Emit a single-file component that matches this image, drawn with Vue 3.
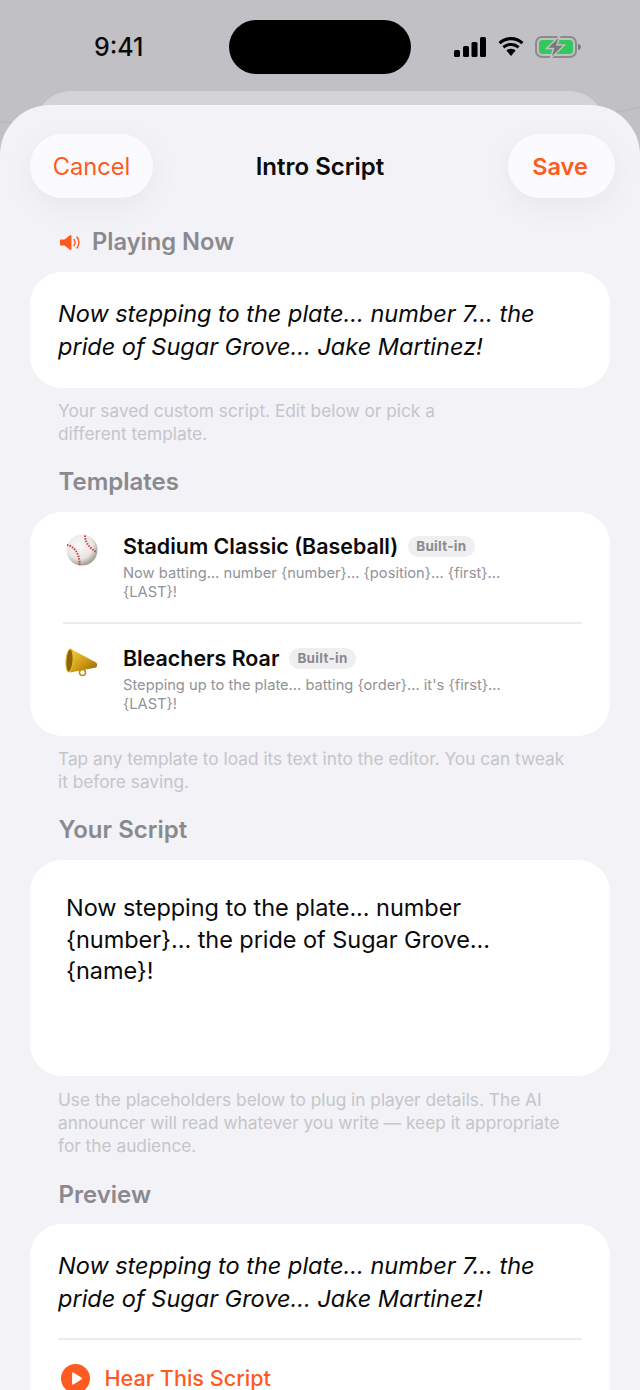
<template>
  <div class="screen">
    <svg class="bg-lines" width="640" height="160" viewBox="0 0 640 160">
      <path d="M0 122c10 0 22 1 40 4M590 118l50-11" fill="none" stroke="#b4b4bc" stroke-width="1"/>
    </svg>
    <div class="status">
      <span class="time">9:41</span>
      <div class="island"></div>
      <div class="status-icons">
        <svg width="33" height="20" viewBox="0 0 33 20"><rect x="1" y="13" width="6" height="7" rx="1.5"/><rect x="10" y="9" width="6" height="11" rx="1.5"/><rect x="18.500" y="5" width="6" height="15" rx="1.5"/><rect x="27" y="0" width="6" height="20" rx="1.5"/></svg>
        <svg width="28" height="22" viewBox="0 0 28 22"><path d="M14 4.200c4 0 7.600 1.500 10.400 4.100l2.100-2.300C23.200 2.900 18.800 1 14 1S4.800 2.900 1.500 6l2.100 2.300C6.400 5.700 10 4.200 14 4.200z"/><path d="M14 10c2.500 0 4.700.9 6.500 2.500l2.100-2.300C20.300 8.100 17.300 6.900 14 6.900s-6.300 1.200-8.600 3.300l2.100 2.300C9.300 10.900 11.500 10 14 10z"/><path d="M14 12.700c-1.800 0-3.400.7-4.600 1.800L14 20l4.600-5.500c-1.200-1.100-2.800-1.800-4.600-1.800z"/></svg>
        <svg class="battery" width="46" height="24" viewBox="0 0 46 24">
          <rect x="1" y="2" width="40" height="20" rx="6" fill="none" stroke="#8b8b8e" stroke-width="2"/>
          <rect x="4" y="5" width="34" height="14" rx="3.500" fill="#34c759"/>
          <path d="M43 9c1.800.3 2.800 1.300 2.800 3s-1 2.700-2.800 3z" fill="#77777a"/>
          <path d="M25 0.500 11.500 13.500h7l-3 10 14-13.500h-7.500z" fill="#77787a" stroke="#c1c0c5" stroke-width="1.500"/>
        </svg>
      </div>
    </div>

    <div class="back-sheet"></div>

    <div class="sheet">
      <header class="nav">
        <button class="pill cancel">Cancel</button>
        <span class="nav-title">Intro Script</span>
        <button class="pill save">Save</button>
      </header>

      <div class="section-title playing">
        <svg width="21" height="17" viewBox="0 0 21 17">
          <path d="M1 5.500h3.500L10 1.200c.7-.5 1.500-.1 1.500.8v13c0 .9-.8 1.300-1.500.8L4.500 11.500H1c-.6 0-1-.4-1-1v-4c0-.6.4-1 1-1z" fill="#ff5a1f"/>
          <path d="M14 5.500c1.300 1.800 1.300 4.200 0 6M17 3c2.300 3.300 2.300 7.700 0 11" fill="none" stroke="#ff5a1f" stroke-width="1.400" stroke-linecap="round"/>
        </svg>
        <span>Playing Now</span>
      </div>
      <div class="card quote">{{ savedScript }}</div>
      <p class="caption narrow">Your saved custom script. Edit below or pick a different template.</p>

      <div class="section-title">Templates</div>
      <div class="card templates">
        <div v-for="t in templates" :key="t.name" class="template">
          <div class="template-icon">
            <svg v-if="t.icon === 'ball'" width="34" height="34" viewBox="0 0 34 34">
              <defs>
                <radialGradient id="ballFill" cx="40%" cy="34%" r="72%">
                  <stop offset="0" stop-color="#fbfaf8"/><stop offset=".62" stop-color="#e9e6e2"/><stop offset="1" stop-color="#8f8983"/>
                </radialGradient>
              </defs>
              <circle cx="17" cy="17" r="15.500" fill="url(#ballFill)"/>
              <path d="M20 2.500C20 9 24 15 31.500 19M2 12C9 13 15 21 14.500 32" fill="none" stroke="#c9423f" stroke-width="2" stroke-dasharray="1.500 1.200"/>
            </svg>
            <svg v-else class="horn" width="34" height="30" viewBox="0 0 34 30">
              <defs>
                <linearGradient id="hornFill" x1="0" y1="0" x2="1" y2="1">
                  <stop offset="0" stop-color="#f4d04a"/><stop offset=".55" stop-color="#cf9a12"/><stop offset="1" stop-color="#8a6206"/>
                </linearGradient>
              </defs>
              <circle cx="17.500" cy="24.500" r="3" fill="none" stroke="#b98a10" stroke-width="1.500"/>
              <path d="M6 1 31 14.500c1.500 1 1.500 4 0 5L5 24.500z" fill="url(#hornFill)"/>
              <ellipse cx="4.500" cy="12.500" rx="3.500" ry="11.500" transform="rotate(4 4.500 12.500)" fill="#8c6509" stroke="#e3bb35" stroke-width="1"/>
            </svg>
          </div>
          <div class="template-body">
            <div class="template-head">
              <span class="template-name">{{ t.name }}</span>
              <span class="badge">Built-in</span>
            </div>
            <div class="template-text">{{ t.text }}</div>
          </div>
        </div>
      </div>
      <p class="caption">Tap any template to load its text into the editor. You can tweak it before saving.</p>

      <div class="section-title">Your Script</div>
      <div class="card editor">Now stepping to the plate... number {number}... the pride of Sugar Grove... {name}!</div>
      <p class="caption">Use the placeholders below to plug in player details. The AI announcer will read whatever you write — keep it appropriate for the audience.</p>

      <div class="section-title last">Preview</div>
      <div class="card preview">
        <div class="preview-text">{{ savedScript }}</div>
        <div class="hear">
          <svg width="29" height="29" viewBox="0 0 30 30"><circle cx="15" cy="15" r="15" fill="#ff5a1f"/><path d="M11.500 9.500v11c0 .8.800 1.200 1.400.8l8.500-5.500c.6-.4.6-1.200 0-1.600l-8.500-5.500c-.6-.4-1.400 0-1.400.8z" fill="#fff"/></svg>
          <span>Hear This Script</span>
        </div>
      </div>
    </div>
  </div>
</template>

<script setup>
const savedScript = 'Now stepping to the plate... number 7... the pride of Sugar Grove... Jake Martinez!'

const templates = [
  { name: 'Stadium Classic (Baseball)', icon: 'ball', text: 'Now batting... number {number}... {position}... {first}... {LAST}!' },
  { name: 'Bleachers Roar', icon: 'horn', text: "Stepping up to the plate... batting {order}... it's {first}... {LAST}!" }
]
</script>

<style>
html, body { margin: 0; background: #c1c0c5; }
</style>

<style scoped>
.screen {
  position: relative;
  width: 640px;
  height: 1390px;
  overflow: hidden;
  background: #c1c0c5;
  font-family: Inter, "Liberation Sans", sans-serif;
}
.bg-lines {
  position: absolute;
  left: 0;
  top: 0;
}
.status {
  height: 105px;
  position: relative;
}
.time {
  position: absolute;
  left: 94px;
  top: 31px;
  font-size: 25px;
  line-height: 32px;
  font-weight: 500;
  color: #0a0a0a;
}
.island {
  position: absolute;
  left: 229px;
  top: 20px;
  width: 182px;
  height: 54px;
  border-radius: 27px;
  background: #000;
}
.status-icons {
  position: absolute;
  left: 453px;
  top: 35px;
  display: flex;
  align-items: center;
  gap: 11px;
}
.status-icons svg { display: block; }
.battery { margin-left: -1px; }
.back-sheet {
  position: absolute;
  left: 35px;
  right: 35px;
  top: 91px;
  height: 60px;
  border-radius: 36px 36px 0 0;
  background: #d4d3d8;
}
.sheet {
  position: relative;
  height: 1285px;
  padding: 29px 30px 0;
  box-sizing: border-box;
  border-radius: 50px 50px 0 0;
  background: #f2f2f7;
}
.nav {
  display: flex;
  align-items: center;
  justify-content: space-between;
  height: 64px;
  margin-right: -5px;
  position: relative;
}
.pill {
  height: 64px;
  border: 0;
  border-radius: 32px;
  background: #fbfbfd;
  color: #ff5a1f;
  font-family: inherit;
  box-shadow: 0 8px 32px rgba(0, 0, 0, 0.05);
}
.cancel { width: 123px; font-size: 23.700px; font-weight: 400; }
.save { width: 107px; padding: 0 9px 0 6px; font-size: 23.500px; font-weight: 600; }
.nav-title {
  position: absolute;
  left: 0;
  right: 5px;
  text-align: center;
  font-size: 24px;
  font-weight: 600;
  color: #0a0a0a;
}
.section-title {
  margin: 22px 0 0 28.500px;
  font-size: 24px;
  line-height: 30px;
  font-weight: 600;
  color: #8a8a8e;
}
.section-title.last { margin-top: 23px; }
.playing {
  display: flex;
  align-items: center;
  gap: 11px;
  margin-top: 29px;
  margin-left: 30px;
  font-size: 23.700px;
}
.card {
  background: #fff;
  border-radius: 32px;
  margin-top: 15px;
}
.quote {
  padding: 25px 28px;
  font-size: 23.500px;
  line-height: 33px;
  font-style: italic;
  color: #0a0a0a;
}
.caption {
  margin: 11px 0 0 28px;
  width: 515px;
  font-size: 17.300px;
  line-height: 23px;
  color: #c5c5ca;
}
.caption.narrow { width: 400px; }
.templates {
  padding: 0 28px;
}
.template {
  display: flex;
  height: 110px;
  box-sizing: border-box;
  padding-top: 21px;
  margin-left: 5px;
}
.template + .template {
  height: 114px;
  border-top: 2px solid #ececee;
}
.template-icon {
  width: 58.500px;
  flex: none;
  margin-left: 1.500px;
}
.horn {
  display: block;
  margin: 3px 0 0;
}
.template-head {
  display: flex;
  align-items: center;
  gap: 10px;
  height: 26px;
}
.template-name {
  font-size: 21.400px;
  font-weight: 600;
  color: #0a0a0a;
}
.badge {
  padding: 0 8px;
  height: 21px;
  line-height: 21px;
  border-radius: 11px;
  background: #efeff1;
  color: #8a8a8e;
  font-size: 13.500px;
  font-weight: 700;
  letter-spacing: 0.3px;
}
.template-text {
  margin-top: 5px;
  width: 430px;
  font-size: 14.700px;
  line-height: 19px;
  color: #929297;
}
.editor {
  height: 216px;
  box-sizing: border-box;
  padding: 32px 36px;
  font-size: 23.500px;
  letter-spacing: -0.05px;
  line-height: 31.500px;
  color: #0a0a0a;
}
.editor + .caption { margin-top: 12px; }
.preview {
  margin-top: 14px;
  padding: 25px 28px 0;
  height: 200px;
}
.preview-text {
  font-size: 23.500px;
  line-height: 33px;
  font-style: italic;
  color: #0a0a0a;
}
.hear {
  display: flex;
  align-items: center;
  gap: 14.500px;
  margin-top: 23px;
  padding-top: 24px;
  border-top: 2px solid #ececee;
  color: #ff5a1f;
  font-size: 21.600px;
  line-height: 29px;
  font-weight: 500;
}
.hear svg { margin-left: 3px; flex: none; }
</style>
